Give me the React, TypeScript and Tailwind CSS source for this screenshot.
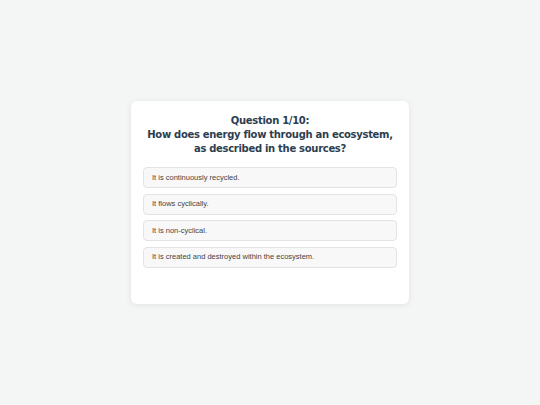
import React from "react";

const options = [
  "It is continuously recycled.",
  "It flows cyclically.",
  "It is non-cyclical.",
  "It is created and destroyed within the ecosystem.",
];

export default function App() {
  return (
    <div className="min-h-[405px] w-full bg-[#f4f5f5] flex items-start justify-center pt-[101px]">
      <div className="w-[278px] h-[203px] bg-white rounded-[6px] shadow-[0_1px_6px_rgba(0,0,0,0.08)] px-3 pt-[13px]">
        <h2
          className="text-center text-[10px] leading-[14px] font-bold tracking-[-0.3px] text-[#2c3e50]"
          style={{ fontFamily: '"DejaVu Sans", Verdana, sans-serif' }}
        >
          Question 1/10:
          <br />
          How does energy flow through an ecosystem,
          <br />
          as described in the sources?
        </h2>
        <div className="mt-[11px] flex flex-col gap-[5.5px]">
          {options.map((o) => (
            <div
              key={o}
              className="h-[21px] flex items-center px-[8px] bg-[#f8f8f8] border border-[#e3e3e3] rounded-[4px] text-[7.5px] text-[#444]"
              style={{ fontFamily: '"Liberation Sans", Arial, sans-serif' }}
            >
              {o}
            </div>
          ))}
        </div>
      </div>
    </div>
  );
}
